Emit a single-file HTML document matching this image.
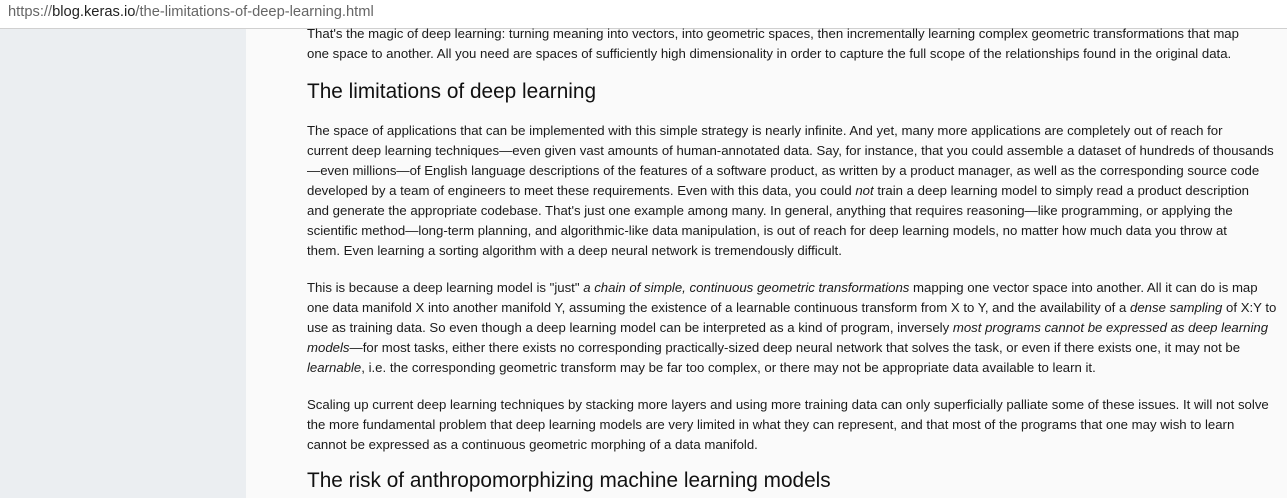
<!DOCTYPE html>
<html><head><meta charset="utf-8"><style>
html,body{margin:0;padding:0;width:1287px;height:498px;overflow:hidden;background:#fafafa;font-family:"Liberation Sans",sans-serif;}
.bar{position:absolute;left:0;top:0;width:1287px;height:28px;background:#fff;border-bottom:1px solid #d0d0d0;}
.url{position:absolute;left:8px;top:4px;font-size:14.7px;color:#666;}
.url b{font-weight:normal;color:#222;}
.side{position:absolute;left:0;top:29px;width:246px;height:469px;background:#ebeef1;}
.l{position:absolute;left:307px;color:#1a1a1a;font-size:13.2px;white-space:nowrap;line-height:20px;}
h2{position:absolute;left:307px;margin:0;font-weight:normal;font-size:20.8px;color:#111;white-space:nowrap;}
</style></head><body>
<div class="bar"><div class="url">https://<b>blog.keras.io</b>/the-limitations-of-deep-learning.html</div></div>
<div class="side"></div>
<div class="l" style="top:24px">That's the magic of deep learning: turning meaning into vectors, into geometric spaces, then incrementally learning complex geometric transformations that map</div>
<div class="l" style="top:44px">one space to another. All you need are spaces of sufficiently high dimensionality in order to capture the full scope of the relationships found in the original data.</div>
<h2 style="top:80px">The limitations of deep learning</h2>
<div class="l" style="top:121px">The space of applications that can be implemented with this simple strategy is nearly infinite. And yet, many more applications are completely out of reach for</div>
<div class="l" style="top:141px">current deep learning techniques—even given vast amounts of human-annotated data. Say, for instance, that you could assemble a dataset of hundreds of thousands</div>
<div class="l" style="top:161px">—even millions—of English language descriptions of the features of a software product, as written by a product manager, as well as the corresponding source code</div>
<div class="l" style="top:181px">developed by a team of engineers to meet these requirements. Even with this data, you could <i>not</i> train a deep learning model to simply read a product description</div>
<div class="l" style="top:201px">and generate the appropriate codebase. That's just one example among many. In general, anything that requires reasoning—like programming, or applying the</div>
<div class="l" style="top:221px">scientific method—long-term planning, and algorithmic-like data manipulation, is out of reach for deep learning models, no matter how much data you throw at</div>
<div class="l" style="top:241px">them. Even learning a sorting algorithm with a deep neural network is tremendously difficult.</div>
<div class="l" style="top:278px">This is because a deep learning model is "just" <i>a chain of simple, continuous geometric transformations</i> mapping one vector space into another. All it can do is map</div>
<div class="l" style="top:298px">one data manifold X into another manifold Y, assuming the existence of a learnable continuous transform from X to Y, and the availability of a <i>dense sampling</i> of X:Y to</div>
<div class="l" style="top:318px">use as training data. So even though a deep learning model can be interpreted as a kind of program, inversely <i>most programs cannot be expressed as deep learning</i></div>
<div class="l" style="top:338px"><i>models</i>—for most tasks, either there exists no corresponding practically-sized deep neural network that solves the task, or even if there exists one, it may not be</div>
<div class="l" style="top:358px"><i>learnable</i>, i.e. the corresponding geometric transform may be far too complex, or there may not be appropriate data available to learn it.</div>
<div class="l" style="top:395px">Scaling up current deep learning techniques by stacking more layers and using more training data can only superficially palliate some of these issues. It will not solve</div>
<div class="l" style="top:415px">the more fundamental problem that deep learning models are very limited in what they can represent, and that most of the programs that one may wish to learn</div>
<div class="l" style="top:435px">cannot be expressed as a continuous geometric morphing of a data manifold.</div>
<h2 style="top:469px">The risk of anthropomorphizing machine learning models</h2>
</body></html>
